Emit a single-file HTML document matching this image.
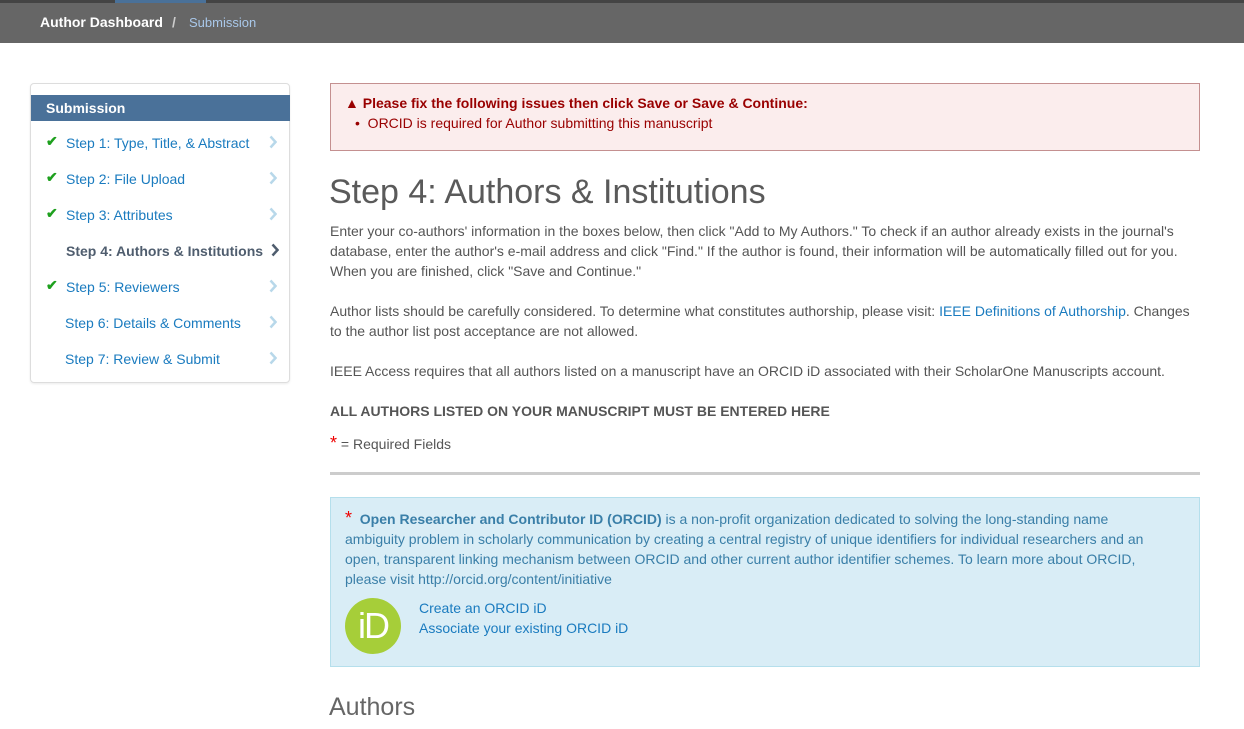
<!DOCTYPE html>
<html><head><meta charset="utf-8"><style>
*{margin:0;padding:0;box-sizing:border-box}
body{width:1244px;height:729px;overflow:hidden;background:#fff;font-family:"Liberation Sans",Arial,sans-serif;font-size:14px;color:#555;position:relative}
.top{position:absolute;left:0;top:0;width:1244px;height:3px;background:#444}
.top i{position:absolute;left:115px;width:91px;height:3px;background:#4a7199}
.bar{position:absolute;left:0;top:3px;width:1244px;height:40px;background:#666;}
.bar .a{position:absolute;left:40px;top:11px;color:#fff;font-weight:bold;font-size:14px}
.bar .s{position:absolute;left:172px;top:11px;color:#ccc;font-size:14px;font-weight:bold}
.bar .b{position:absolute;left:189px;top:12px;color:#a9c8ea;font-size:13px}
.side{position:absolute;left:30px;top:83px;width:260px;height:300px;border:1px solid #ddd;border-radius:4px;box-shadow:0 1px 2px rgba(0,0,0,.08)}
.side h4{position:absolute;left:0;top:11px;width:259px;height:26px;background:#4a7199;color:#fff;font-size:14px;padding:5px 15px;font-weight:bold}
.st{position:absolute;left:35px;color:#1a7bbf;font-size:14px;white-space:nowrap}
.st.cur{color:#4f5d6e;font-weight:bold}
.ck{position:absolute;left:15px;color:#1ea01e;font-size:14px;font-weight:bold}
.ch{position:absolute;left:238px;width:8px;height:14px}
.err{position:absolute;left:330px;top:83px;width:870px;height:68px;background:#fbeded;border:1px solid #c49090}
.err .t{position:absolute;left:14px;top:11px;color:#990000;font-weight:bold;font-size:14px}
.err .l{position:absolute;left:24px;top:31px;color:#990000;font-size:14px}
h1{position:absolute;left:329px;top:173px;font-weight:300;font-size:34px;color:#5a5a5a}
.p{position:absolute;left:330px;width:870px;line-height:20px;font-size:14px;color:#555}
a{color:#1a7bbf;text-decoration:none}
.hr{position:absolute;left:330px;top:472px;width:870px;height:3px;background:#ccc}
.info{position:absolute;left:330px;top:497px;width:870px;height:170px;background:#d9edf6;border:1px solid #b5dfec;color:#31708f}
.info .tx{position:absolute;left:14px;top:10px;width:820px;line-height:20px;font-size:14px;color:#3a7fa8}
.logo{position:absolute;left:14px;top:100px;width:56px;height:56px;border-radius:50%;background:#a6ce39;color:#fff;font-size:36px;text-align:center;line-height:56px;letter-spacing:-2px}
.lk{position:absolute;left:88px;line-height:20px;color:#1a7bbf}
h2{position:absolute;left:329px;top:693px;font-weight:300;font-size:25px;color:#666}
</style></head><body>
<div class="top"><i></i></div>
<div class="bar"><span class="a">Author Dashboard</span><span class="s">/</span><span class="b">Submission</span></div>
<div class="side">
<h4>Submission</h4>
<span class="ck" style="top:49px">✔</span><span class="st" style="top:51px">Step 1: Type, Title, &amp; Abstract</span><svg class="ch" style="top:51px" viewBox="0 0 8 14"><polyline points="1.5,1.5 6.5,7 1.5,12.5" fill="none" stroke="#b8d8ea" stroke-width="2.5"/></svg>
<span class="ck" style="top:85px">✔</span><span class="st" style="top:87px">Step 2: File Upload</span><svg class="ch" style="top:87px" viewBox="0 0 8 14"><polyline points="1.5,1.5 6.5,7 1.5,12.5" fill="none" stroke="#b8d8ea" stroke-width="2.5"/></svg>
<span class="ck" style="top:121px">✔</span><span class="st" style="top:123px">Step 3: Attributes</span><svg class="ch" style="top:123px" viewBox="0 0 8 14"><polyline points="1.5,1.5 6.5,7 1.5,12.5" fill="none" stroke="#b8d8ea" stroke-width="2.5"/></svg>
<span class="st cur" style="top:159px">Step 4: Authors &amp; Institutions</span><svg class="ch" style="top:159px;left:240px" viewBox="0 0 8 14"><polyline points="1.5,1.5 6.5,7 1.5,12.5" fill="none" stroke="#4f5d6e" stroke-width="2.5"/></svg>
<span class="ck" style="top:193px">✔</span><span class="st" style="top:195px">Step 5: Reviewers</span><svg class="ch" style="top:195px" viewBox="0 0 8 14"><polyline points="1.5,1.5 6.5,7 1.5,12.5" fill="none" stroke="#b8d8ea" stroke-width="2.5"/></svg>
<span class="st" style="top:231px;left:34px">Step 6: Details &amp; Comments</span><svg class="ch" style="top:231px" viewBox="0 0 8 14"><polyline points="1.5,1.5 6.5,7 1.5,12.5" fill="none" stroke="#b8d8ea" stroke-width="2.5"/></svg>
<span class="st" style="top:267px;left:34px">Step 7: Review &amp; Submit</span><svg class="ch" style="top:267px" viewBox="0 0 8 14"><polyline points="1.5,1.5 6.5,7 1.5,12.5" fill="none" stroke="#b8d8ea" stroke-width="2.5"/></svg>
</div>
<div class="err"><div class="t">▲ Please fix the following issues then click Save or Save &amp; Continue:</div><div class="l">•&nbsp;&nbsp;ORCID is required for Author submitting this manuscript</div></div>
<h1>Step 4: Authors &amp; Institutions</h1>
<div class="p" style="top:221px">Enter your co-authors' information in the boxes below, then click "Add to My Authors." To check if an author already exists in the journal's database, enter the author's e-mail address and click "Find." If the author is found, their information will be automatically filled out for you. When you are finished, click "Save and Continue."</div>
<div class="p" style="top:301px">Author lists should be carefully considered. To determine what constitutes authorship, please visit: <a>IEEE Definitions of Authorship</a>. Changes to the author list post acceptance are not allowed.</div>
<div class="p" style="top:361px">IEEE Access requires that all authors listed on a manuscript have an ORCID iD associated with their ScholarOne Manuscripts account.</div>
<div class="p" style="top:401px;font-weight:bold;font-size:14px">ALL AUTHORS LISTED ON YOUR MANUSCRIPT MUST BE ENTERED HERE</div>
<div class="p" style="top:433px"><span style="color:#e00;font-size:18px">*</span> = Required Fields</div>
<div class="hr"></div>
<div class="info"><div class="tx"><span style="color:#e00;font-size:18px">*</span>&nbsp; <b>Open Researcher and Contributor ID (ORCID)</b> is a non-profit organization dedicated to solving the long-standing name ambiguity problem in scholarly communication by creating a central registry of unique identifiers for individual researchers and an open, transparent linking mechanism between ORCID and other current author identifier schemes. To learn more about ORCID, please visit http://orcid.org/content/initiative</div>
<div class="logo">iD</div>
<div class="lk" style="top:100px">Create an ORCID iD</div>
<div class="lk" style="top:120px">Associate your existing ORCID iD</div>
</div>
<h2>Authors</h2>
</body></html>
